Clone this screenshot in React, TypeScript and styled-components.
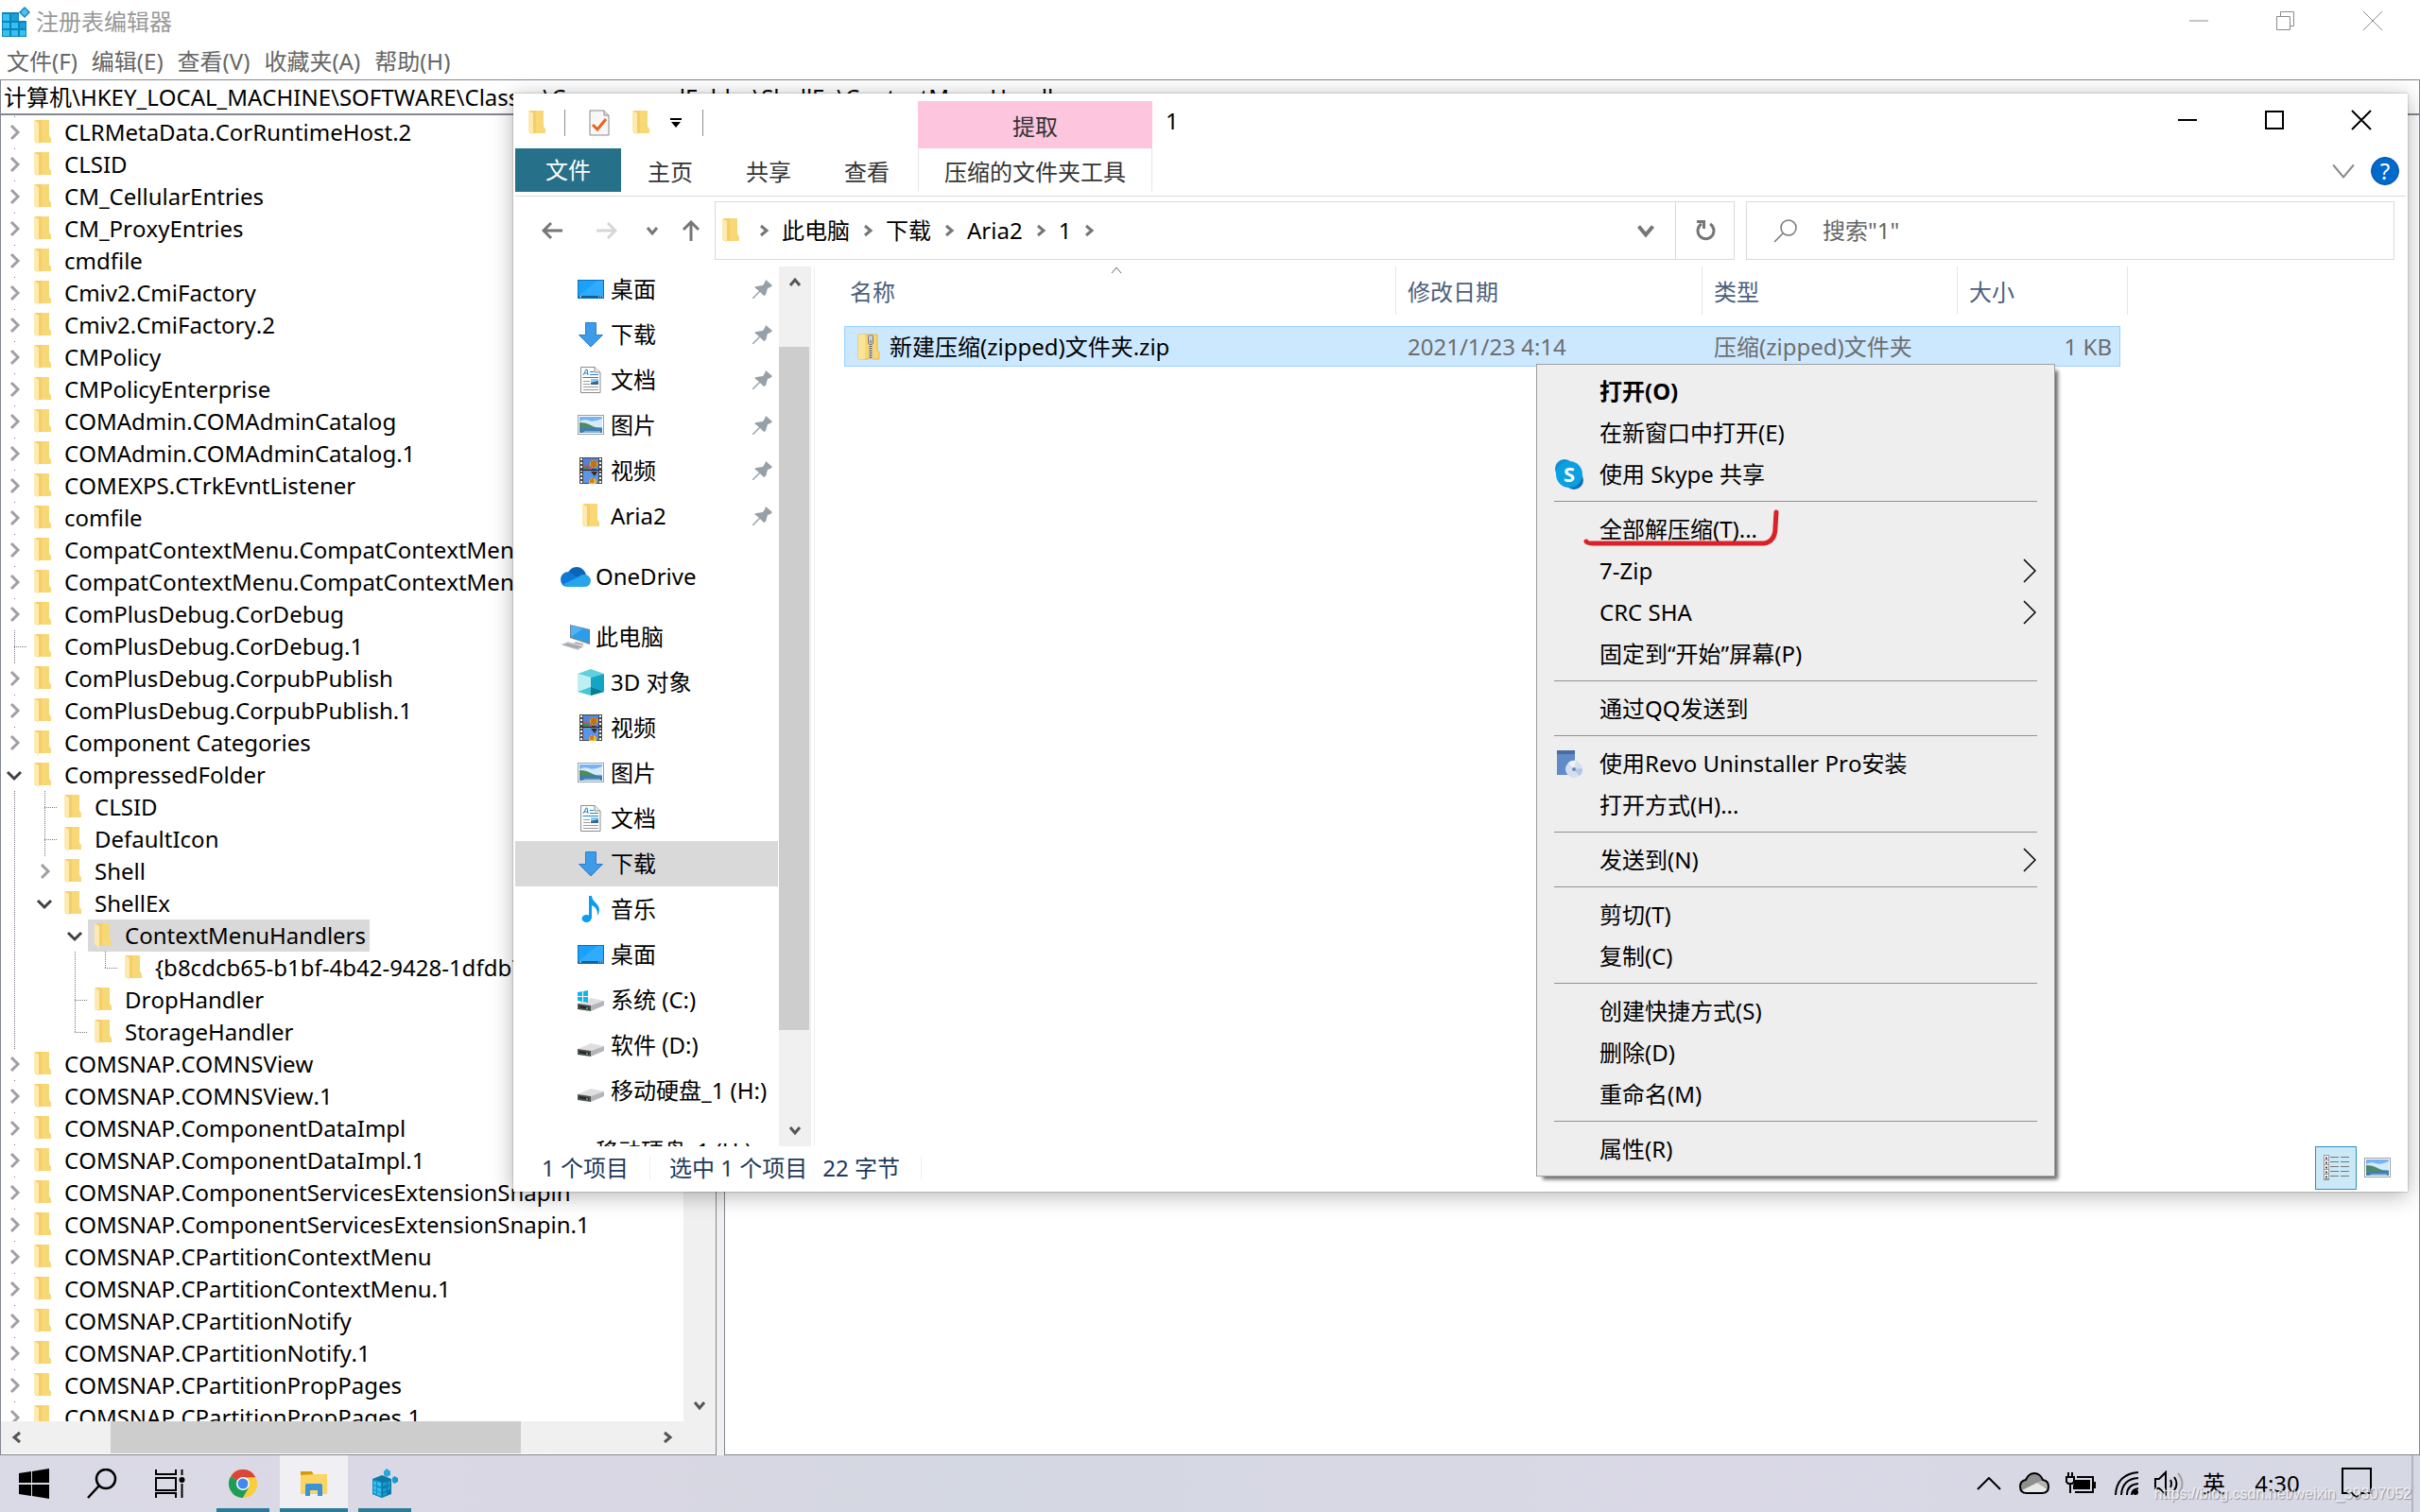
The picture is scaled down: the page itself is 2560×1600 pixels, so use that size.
import React from "react";
import styled, { createGlobalStyle, css } from "styled-components";

const GlobalStyle = createGlobalStyle`
  * { box-sizing: border-box; }
  html, body, #root { height: 100%; margin: 0; }
  body {
    font-family: "Noto Sans", "Noto Sans CJK SC", sans-serif;
    font-size: 24px;
    line-height: 34px;
    font-kerning: none;
    color: #000;
    overflow: hidden;
  }
  button, input { font: inherit; font-kerning: none; color: inherit; border: 0; padding: 0; margin: 0; background: none; }
  ul { list-style: none; margin: 0; padding: 0; }
  svg { display: block; flex: none; }
`;

/* ---------- shared icons ---------- */

const Folder = () => (
  <svg width="18" height="26" viewBox="0 0 18 26">
    <path d="M1 0H16V17L18 20V24H1Z" fill="#f5cd6b" />
    <path d="M8 0H16V17L18 20V24H8Z" fill="#f8d775" />
    <path d="M0 0L5 3V26L0 22Z" fill="#fdeab0" />
  </svg>
);

const DesktopIcon = () => (
  <svg width="28" height="28" viewBox="0 0 28 28">
    <rect x="0.5" y="4.5" width="27" height="19" fill="#1ba1fb" stroke="#0b6fb8" />
    <path d="M1 21L21 5H27V21Z" fill="#3fb2ff" opacity=".6" />
    <rect x="1" y="21" width="26" height="2" fill="#0d5f9f" />
    <path d="M2 22h2M22 22h1M24 22h1M26 22h1" stroke="#fff" />
  </svg>
);

const DownloadIcon = () => (
  <svg width="28" height="28" viewBox="0 0 28 28">
    <path d="M8.500 1.500H19.500V14.500H26.500L14 27L1.500 14.500H8.500Z" fill="#3d9be9" stroke="#2a7fcb" />
  </svg>
);

const DocumentIcon = () => (
  <svg width="28" height="28" viewBox="0 0 28 28">
    <path d="M3.500 0.500H18L24 6V27.500H3.500Z" fill="#fff" stroke="#8c8c8c" />
    <path d="M18 0.500V6H24" fill="#eee" stroke="#8c8c8c" />
    <path d="M6 9L9 3H10L11 9M7 7H11" fill="none" stroke="#1e84c4" />
    <path d="M13 5.500H17M13 8.500H22M5.500 11.500H22" stroke="#1e84c4" />
    <path d="M6 15.500H13M6 18.500H13M6 21.500H22M6 24.500H22" stroke="#9a9a9a" />
    <rect x="14" y="13" width="8" height="6" fill="#31688f" />
    <path d="M14 13h8v2l-8 2Z" fill="#8ec6ee" />
  </svg>
);

const PictureIcon = () => (
  <svg width="28" height="28" viewBox="0 0 28 28">
    <rect x="0.500" y="3.500" width="27" height="20" fill="#fff" stroke="#9aa0a6" />
    <rect x="2" y="5" width="24" height="17" fill="#76b4f3" />
    <path d="M2 10q5-3 10-1t14-2v9H2Z" fill="#d5ebfb" />
    <path d="M2 11q7 0 12 3t12 3v1H2Z" fill="#4f8a63" />
    <path d="M2 17H26V22H2Z" fill="#3f7fb0" />
    <path d="M8 20H24V22H5Z" fill="#7fb0d4" />
  </svg>
);

const VideoIcon = () => (
  <svg width="28" height="28" viewBox="0 0 28 28">
    <rect x="2" y="0" width="24" height="28" fill="#4a4a4a" />
    <path d="M4 1V28M24 1V28" stroke="#fff" strokeWidth="2" strokeDasharray="2 2" />
    <rect x="6" y="1" width="16" height="12" fill="#4f83dd" />
    <rect x="6" y="14" width="16" height="13" fill="#5b94ea" />
    <path d="M6 9q3-3 6 0t5 3v1H6Z" fill="#c7507b" />
    <path d="M6 10h6v3H6Z" fill="#3c8c4a" />
    <circle cx="17" cy="7" r="4" fill="#f2b71c" />
    <path d="M17 3v8M15 4v6M19 4v6" stroke="#8f2a12" />
    <path d="M15 12h4v2h-4z" fill="#6a3b12" />
    <path d="M14 15h7l-3 5Z" fill="#3b2a17" />
    <circle cx="16" cy="26" r="4" fill="#f2b71c" />
    <path d="M16 22v5M14 23v4" stroke="#b5441a" />
    <path d="M2 13.500H26" stroke="#222" />
  </svg>
);

const MusicIcon = () => (
  <svg width="28" height="28" viewBox="0 0 28 28">
    <ellipse cx="9.500" cy="24" rx="5" ry="4" fill="#0c9cf0" />
    <path d="M12 0H15C15 6 23 8 23 15Q23 18 21 21Q22 13 15 10V24H12Z" fill="#0c9cf0" />
  </svg>
);

const CubeIcon = () => (
  <svg width="28" height="28" viewBox="0 0 28 28">
    <path d="M14 0L28 5L14 9L0 5Z" fill="#5fd0dc" />
    <path d="M0 5L14 9V20L0 24Z" fill="#bdeff2" />
    <path d="M28 5L14 9V20L28 24Z" fill="#12a5c6" />
    <path d="M0 24L14 19L28 24L14 28Z" fill="#45c6d3" />
    <path d="M14 19L28 24L14 28Z" fill="#0a7c94" />
  </svg>
);

const DriveIcon = ({ system }: { system?: boolean }) => (
  <svg width="28" height="28" viewBox="0 0 28 28">
    <path d="M0 18L14 12L28 15L14 20Z" fill="#dfdfe1" />
    <path d="M0 18L14 20V26L0 24Z" fill="#4b4f4d" />
    <path d="M14 20L28 15V20L14 26Z" fill="#b4b5b9" />
    <path d="M2 20L12 22V24L2 22Z" fill="#222" />
    <circle cx="10" cy="23" r="1" fill="#4fd161" />
    {system && (
      <path d="M0 6L5 5V10H0ZM6 5L11 4V10H6ZM0 11H5V16L0 15ZM6 11H11V17L6 16Z" fill="#12b5ea" />
    )}
  </svg>
);

const CloudIcon = () => (
  <svg width="32" height="28" viewBox="0 0 32 28">
    <path d="M7 12Q10 4 17 4Q24 4 27 12L16 18Z" fill="#0a64b8" />
    <path d="M7 25Q0 24 0 17Q1 9 9 9L22 17L12 25Z" fill="#0f78d2" />
    <path d="M18 15Q22 11 27 12Q32 14 32 19Q31 25 25 25H7Q4 24 3 22Z" fill="#28a4ea" />
  </svg>
);

const ComputerIcon = () => (
  <svg width="32" height="28" viewBox="0 0 32 28">
    <path d="M10 1L31 6V22L10 15Z" fill="#707f8c" />
    <path d="M11 2L30 7V20L11 14Z" fill="#4db5f7" />
    <path d="M11 14L24 5L30 7V20Z" fill="#2d9dea" />
    <path d="M0 22L8 19L25 24L18 28Z" fill="#c9ccd0" />
    <path d="M3 22l16 4M6 21l16 4" stroke="#8f949a" />
    <path d="M16 19l8 2v2l-10-2Z" fill="#aeb3b9" />
  </svg>
);

const ZipIcon = () => (
  <svg width="24" height="28" viewBox="0 0 24 28">
    <path d="M1 1H21V17L23 20V27H1Z" fill="#f8d671" stroke="#eab83c" />
    <path d="M1 1H8V27H1Z" fill="#fbe497" />
    <path d="M12 0h4v28h-4z" fill="#d8d8d8" />
    <path d="M14 11V27" stroke="#555" strokeWidth="3" strokeDasharray="1 1" />
    <rect x="11.500" y="1.500" width="5" height="10" rx="2" fill="#cfcfcf" stroke="#777" />
    <path d="M14 7v3" stroke="#555" />
  </svg>
);

const PinIcon = () => (
  <svg width="21" height="21" viewBox="0 0 21 21">
    <path d="M14 0L21 6L19 8L16 9L14 16L12 17L8 13L1 20H0V19L7 12L2 8L4 7L11 6L13 3Z" fill="#96a0a8" />
  </svg>
);

type Direction = "up" | "down" | "left" | "right";
const turns: Record<Direction, number> = { down: 0, left: 90, up: 180, right: 270 };

const Chevron = ({ dir, size = 12, weight = 3, color = "#555" }: {
  dir: Direction; size?: number; weight?: number; color?: string;
}) => (
  <svg width={size} height={size} viewBox="0 0 12 12" overflow="visible">
    <path
      d="M1 3L6 9L11 3"
      fill="none"
      stroke={color}
      strokeWidth={(weight * 12) / size}
      transform={`rotate(${turns[dir]} 6 6)`}
    />
  </svg>
);

const Arrow = ({ dir, color = "#767676" }: { dir: Direction; color?: string }) => (
  <svg width="22" height="22" viewBox="0 0 22 22">
    <path
      d="M11 0V20M3 12L11 20L19 12"
      fill="none"
      stroke={color}
      strokeWidth="3"
      transform={`rotate(${turns[dir]} 11 11)`}
    />
  </svg>
);

const WindowGlyph = ({ kind, color, weight }: { kind: string; color: string; weight: number }) => (
  <svg width="22" height="22" viewBox="0 0 22 22" fill="none" stroke={color} strokeWidth={weight}>
    {kind === "min" && <path d="M1 11H21" />}
    {kind === "max" && <rect x="2" y="2" width="18" height="18" />}
    {kind === "restore" && <path d="M1.500 6.500H15.500V20.500H1.500ZM5.500 6V1.500H19.500V16.500H16" />}
    {kind === "close" && <path d="M1 1L21 21M21 1L1 21" />}
  </svg>
);

/* ---------- desktop ---------- */

const Desktop = styled.div`
  display: grid;
  grid-template-rows: 1fr 60px;
  height: 100vh;
  position: relative;
  overflow: hidden;
  background: #fff;
`;

const WindowControls = styled.div<{ $inset: number }>`
  display: flex;
  margin-left: auto;
  padding-right: ${(p) => p.$inset}px;
`;

const WindowButton = styled.button<{ $height: number }>`
  width: 92px;
  height: ${(p) => p.$height}px;
  display: grid;
  place-items: center;
`;

const Scrollbar = styled.div<{ $horizontal?: boolean }>`
  display: flex;
  flex-direction: ${(p) => (p.$horizontal ? "row" : "column")};
  justify-content: space-between;
  background: #f0f0f0;
  ${(p) => (p.$horizontal ? css`height: 34px; padding-right: 34px;` : css`width: 34px;`)}
  flex: none;
`;

const ScrollButton = styled.button`
  width: 34px;
  height: 34px;
  display: grid;
  place-items: center;
  flex: none;
`;

/* ---------- registry editor ---------- */

const Registry = styled.section`
  display: flex;
  flex-direction: column;
  min-height: 0;
  min-width: 0;
`;

const RegistryTitle = styled.header`
  display: flex;
  height: 46px;
  color: #999;
`;

const RegistryName = styled.div`
  display: flex;
  align-items: center;
  gap: 6px;
`;

const MenuBar = styled.nav`
  display: flex;
  gap: 15px;
  padding: 0 7px;
  height: 38px;
  align-items: center;
  color: #666;
`;

const AddressInput = styled.input`
  height: 38px;
  width: 100%;
  border: 1px solid #828790;
  border-bottom-width: 2px;
  padding: 0 3px 2px;
  outline: 0;
`;

const Panes = styled.div`
  flex: 1;
  min-height: 0;
  display: flex;
  gap: 8px;
  background: #f0f0f0;
`;

const TreePane = styled.div`
  width: 758px;
  display: flex;
  flex-direction: column;
  background: #fff;
  border: 1px solid #828790;
  border-top: 0;
  padding-bottom: 1px;
`;

const TreeBody = styled.div`
  flex: 1;
  min-height: 0;
  display: flex;
  justify-content: space-between;
`;

const TreeList = styled.ul`
  flex: 1;
  min-width: 0;
  overflow: hidden;
  padding-top: 1px;
`;

const TreeRow = styled.li`
  display: flex;
  gap: 4px;
  height: 34px;
`;

const TreeLabel = styled.button<{ $selected?: boolean }>`
  display: flex;
  align-items: center;
  gap: 14px;
  padding: 0 4px 0 7px;
  margin-left: -4px;
  height: 34px;
  white-space: nowrap;
  background: ${(p) => (p.$selected ? "#d9d9d9" : "none")};
`;

const TreeThumb = styled.div`
  flex: none;
  width: 434px;
  background: #cdcdcd;
  margin: 0 auto 0 82px;
`;

const ValuePane = styled.div`
  flex: 1;
  background: #fff;
  border: 1px solid #828790;
  border-top: 0;
`;

type Guide = "line" | "none" | "tee" | "elbow" | "closed" | "open";

const GuideCell = ({ kind }: { kind: Guide }) => (
  <svg width="28" height="34" viewBox="0 0 28 34" fill="none">
    {(kind === "line" || kind === "tee") && <path d="M14.500 0V34" stroke="#777" strokeDasharray="1 1" />}
    {kind === "elbow" && <path d="M14.500 0V17" stroke="#777" strokeDasharray="1 1" />}
    {(kind === "tee" || kind === "elbow") && <path d="M14 17.500H28" stroke="#777" strokeDasharray="1 1" />}
    {kind === "closed" && (
      <>
        <path d="M14.500 0V1" stroke="#777" />
        <path d="M11 10L18 17L11 24" stroke="#a0a0a0" strokeWidth="3" />
      </>
    )}
    {kind === "open" && <path d="M7 14L14 21L21 14" stroke="#404040" strokeWidth="3" />}
  </svg>
);

type Key = { name: string; guides?: Guide[]; selected?: boolean };

const keys: Key[] = [
  ...[
    "CLRMetaData.CorRuntimeHost.2", "CLSID", "CM_CellularEntries", "CM_ProxyEntries", "cmdfile",
    "Cmiv2.CmiFactory", "Cmiv2.CmiFactory.2", "CMPolicy", "CMPolicyEnterprise",
    "COMAdmin.COMAdminCatalog", "COMAdmin.COMAdminCatalog.1", "COMEXPS.CTrkEvntListener", "comfile",
    "CompatContextMenu.CompatContextMenu", "CompatContextMenu.CompatContextMenu.1",
    "ComPlusDebug.CorDebug",
  ].map((name) => ({ name })),
  { name: "ComPlusDebug.CorDebug.1", guides: ["tee"] },
  { name: "ComPlusDebug.CorpubPublish" },
  { name: "ComPlusDebug.CorpubPublish.1" },
  { name: "Component Categories" },
  { name: "CompressedFolder", guides: ["open"] },
  { name: "CLSID", guides: ["line", "tee"] },
  { name: "DefaultIcon", guides: ["line", "tee"] },
  { name: "Shell", guides: ["line", "closed"] },
  { name: "ShellEx", guides: ["line", "open"] },
  { name: "ContextMenuHandlers", guides: ["line", "none", "open"], selected: true },
  { name: "{b8cdcb65-b1bf-4b42-9428-1dfdb7ee92af}", guides: ["line", "none", "line", "elbow"] },
  { name: "DropHandler", guides: ["line", "none", "tee"] },
  { name: "StorageHandler", guides: ["line", "none", "elbow"] },
  ...[
    "COMSNAP.COMNSView", "COMSNAP.COMNSView.1", "COMSNAP.ComponentDataImpl",
    "COMSNAP.ComponentDataImpl.1", "COMSNAP.ComponentServicesExtensionSnapin",
    "COMSNAP.ComponentServicesExtensionSnapin.1", "COMSNAP.CPartitionContextMenu",
    "COMSNAP.CPartitionContextMenu.1", "COMSNAP.CPartitionNotify", "COMSNAP.CPartitionNotify.1",
    "COMSNAP.CPartitionPropPages", "COMSNAP.CPartitionPropPages.1",
  ].map((name) => ({ name })),
];

const RegistryLogo = () => (
  <svg width="32" height="32" viewBox="0 0 32 32">
    <rect x="2" y="6" width="26" height="26" fill="#0a86bd" />
    <path d="M3 8h7v7H3zM3 17h7v6H3zM12 17h7v6h-7zM3 25h7v6H3zM12 25h7v6h-7zM21 25h6v6h-6z" fill="#35c1f1" />
    <path d="M12 8h7v7h-7zM21 17h6v6h-6z" fill="#1b9fd6" />
    <path d="M20 5h9v10h-9z" fill="#fff" />
    <path d="M26 0L32 6L26 12L20 6Z" fill="#1585b8" />
    <path d="M26 2L30 6L26 10L22 6Z" fill="#4fc3ee" />
  </svg>
);

function RegistryEditor() {
  return (
    <Registry aria-label="注册表编辑器">
      <RegistryTitle>
        <RegistryName><RegistryLogo />注册表编辑器</RegistryName>
        <WindowControls $inset={4}>
          {["min", "restore", "close"].map((kind) => (
            <WindowButton key={kind} $height={44} aria-label={kind}>
              <WindowGlyph kind={kind} color="#8a8a8a" weight={1} />
            </WindowButton>
          ))}
        </WindowControls>
      </RegistryTitle>
      <MenuBar>
        {["文件(F)", "编辑(E)", "查看(V)", "收藏夹(A)", "帮助(H)"].map((m) => <button key={m}>{m}</button>)}
      </MenuBar>
      <AddressInput
        aria-label="地址"
        defaultValue="计算机\HKEY_LOCAL_MACHINE\SOFTWARE\Classes\CompressedFolder\ShellEx\ContextMenuHandlers"
      />
      <Panes>
        <TreePane>
          <TreeBody>
            <TreeList>
              {keys.map((k) => (
                <TreeRow key={k.name + (k.guides?.length ?? 0)}>
                  {(k.guides ?? ["closed"]).map((g, i) => <GuideCell key={i} kind={g as Guide} />)}
                  <TreeLabel $selected={k.selected}><Folder />{k.name}</TreeLabel>
                </TreeRow>
              ))}
            </TreeList>
            <Scrollbar>
              <ScrollButton aria-label="向上"><Chevron dir="up" /></ScrollButton>
              <ScrollButton aria-label="向下"><Chevron dir="down" /></ScrollButton>
            </Scrollbar>
          </TreeBody>
          <Scrollbar $horizontal>
            <ScrollButton aria-label="向左"><Chevron dir="left" /></ScrollButton>
            <TreeThumb />
            <ScrollButton aria-label="向右"><Chevron dir="right" /></ScrollButton>
          </Scrollbar>
        </TreePane>
        <ValuePane />
      </Panes>
    </Registry>
  );
}

/* ---------- file explorer ---------- */

const Explorer = styled.section`
  position: absolute;
  left: 543px;
  top: 99px;
  right: 13px;
  bottom: 339px;
  display: flex;
  flex-direction: column;
  padding: 0 2px;
  background: #fff;
  box-shadow: 0 0 2px rgba(0, 0, 0, 0.35), 0 4px 22px rgba(0, 0, 0, 0.3);
`;

const CaptionRow = styled.header`
  display: flex;
  height: 58px;
`;

const QuickAccess = styled.div`
  width: 426px;
  display: flex;
  align-items: center;
  padding: 0 0 0 14px;
  height: 62px;
`;

const QuickButton = styled.button<{ $width: number }>`
  width: ${(p) => p.$width}px;
  display: grid;
  place-items: center;
`;

const Divider = styled.span<{ $spaced?: boolean }>`
  width: 1px;
  height: 28px;
  margin-left: ${(p) => (p.$spaced ? 20 : 0)}px;
  background: #8c8c8c;
`;

const ContextTabTitle = styled.div`
  width: 248px;
  margin-top: 8px;
  padding-top: 4px;
  display: grid;
  place-items: center;
  background: #fdc5de;
  color: #333;
`;

const Caption = styled.div`
  padding: 12px 14px;
`;

const TabRow = styled.div`
  display: flex;
  height: 51px;
  border-bottom: 1px solid #dadbdc;
  color: #333;
`;

const Tab = styled.button<{ $kind?: "file" | "context" }>`
  height: 46px;
  width: 104px;
  padding-top: 4px;
  ${(p) => p.$kind === "file" && css`
    width: 112px;
    padding: 0;
    background: #277089;
    color: #fff;
  `}
  ${(p) => p.$kind === "context" && css`
    width: 248px;
    margin-left: 2px;
    border: 1px solid;
    border-color: transparent #e4e4e4;
  `}
`;

const TabTools = styled.div`
  display: flex;
  align-items: center;
  gap: 16px;
  margin-left: auto;
  padding: 0 7px 2px 0;
`;

const HelpButton = styled.button`
  width: 30px;
  height: 30px;
  border-radius: 50%;
  border: 1px solid #0a4f96;
  background: #0069cc;
  color: #fff;
  line-height: 28px;
`;

const NavigationRow = styled.div`
  display: flex;
  height: 74px;
  padding: 5px 12px 7px 10px;
`;

const NavButton = styled.button<{ $width: number }>`
  width: ${(p) => p.$width}px;
  display: grid;
  place-items: center;
`;

const AddressBox = styled.div`
  flex: 1070;
  margin: 0 12px 0 3px;
  border: 1px solid #d9d9d9;
  display: flex;
  align-items: center;
  padding-left: 7px;
`;

const Crumbs = styled.div`
  display: flex;
  align-items: center;
  gap: 13px;
  margin-left: 20px;
  flex: 1;
`;

const DropButton = styled.button<{ $divided?: boolean }>`
  width: 62px;
  height: 100%;
  display: grid;
  place-items: center;
  border-left: ${(p) => (p.$divided ? "1px solid #d9d9d9" : "0")};
`;

const SearchBox = styled.label`
  flex: 656;
  border: 1px solid #d9d9d9;
  display: flex;
  align-items: center;
  gap: 27px;
  padding-left: 28px;
  color: #666;
  input { flex: 1; min-width: 0; outline: 0; }
  input::placeholder { color: #666; opacity: 1; }
`;

const ExplorerBody = styled.div`
  flex: 1;
  min-height: 0;
  display: flex;
`;

const NavPane = styled.ul`
  width: 279px;
  overflow: hidden;
`;

const NavItem = styled.li<{ $root?: boolean; $selected?: boolean }>`
  display: flex;
  align-items: center;
  height: 48px;
  margin: ${(p) => (p.$root ? 16 : 0)}px 1px 0 0;
  padding: 0 6px 0 ${(p) => (p.$root ? 48 : 66)}px;
  background: ${(p) => (p.$selected ? "#d9d9d9" : "none")};
  white-space: nowrap;
  button { display: flex; align-items: center; gap: ${(p) => (p.$root ? 5 : 7)}px; }
  > svg { margin-left: auto; }
`;

const IconSlot = styled.span<{ $wide?: boolean }>`
  width: ${(p) => (p.$wide ? 32 : 28)}px;
  display: grid;
  place-items: center;
`;

const NavScrollbar = styled(Scrollbar)`
  margin-right: 3px;
`;

const NavThumb = styled.div`
  flex: 0 1 723px;
  margin: 51px 2px auto 0;
  background: #cdcdcd;
`;

const FileArea = styled.div`
  flex: 1;
  min-width: 0;
  border-left: 1px solid #f0f0f0;
  padding-left: 31px;
`;

const FileTable = styled.table`
  table-layout: fixed;
  width: 1358px;
  border-spacing: 0;
  th {
    position: relative;
    height: 51px;
    padding: 2px 0 0 12px;
    text-align: left;
    font-weight: 400;
    color: #4c607a;
    border-right: 1px solid #e5e5e5;
  }
  th:first-child { padding-left: 6px; }
  td {
    height: 43px;
    padding: 0 0 0 12px;
    background: #cce8ff;
    border: solid #99d1ff;
    border-width: 1px 0;
    color: #6d6d6d;
    white-space: nowrap;
  }
  td:first-child { border-left-width: 1px; color: #000; padding-left: 13px; }
  td:nth-child(4) { border-right-width: 1px; text-align: right; padding-right: 8px; }
  td:last-child { background: none; border: 0; padding: 0; }
  tbody::before { content: ""; display: block; height: 12px; }
`;

const SortMark = styled.span`
  position: absolute;
  top: -2px;
  left: calc(50% - 10px);
`;

const FileName = styled.div`
  display: flex;
  align-items: center;
  gap: 10px;
`;

const StatusBar = styled.footer`
  display: flex;
  height: 48px;
  padding: 0 16px 2px 28px;
  color: #1e395b;
  align-items: center;
`;

const StatusItem = styled.span`
  display: flex;
  gap: 16px;
  padding-right: 22px;
  margin-right: 20px;
  line-height: 24px;
  border-right: 1px solid #efefef;
`;

const ViewButtons = styled.div`
  display: flex;
  gap: 8px;
  margin-left: auto;
`;

const ViewButton = styled.button<{ $active?: boolean }>`
  height: 46px;
  min-width: ${(p) => (p.$active ? 44 : 28)}px;
  display: grid;
  place-items: center;
  ${(p) => p.$active && css`
    background: #cbe8f6;
    border: 1px solid #2f8fc0;
  `}
`;

type Place = { name: string; icon: React.ReactNode; root?: boolean; pinned?: boolean; selected?: boolean };

const places: Place[] = [
  { name: "桌面", icon: <DesktopIcon />, pinned: true },
  { name: "下载", icon: <DownloadIcon />, pinned: true },
  { name: "文档", icon: <DocumentIcon />, pinned: true },
  { name: "图片", icon: <PictureIcon />, pinned: true },
  { name: "视频", icon: <VideoIcon />, pinned: true },
  { name: "Aria2", icon: <Folder />, pinned: true },
  { name: "OneDrive", icon: <CloudIcon />, root: true },
  { name: "此电脑", icon: <ComputerIcon />, root: true },
  { name: "3D 对象", icon: <CubeIcon /> },
  { name: "视频", icon: <VideoIcon /> },
  { name: "图片", icon: <PictureIcon /> },
  { name: "文档", icon: <DocumentIcon /> },
  { name: "下载", icon: <DownloadIcon />, selected: true },
  { name: "音乐", icon: <MusicIcon /> },
  { name: "桌面", icon: <DesktopIcon /> },
  { name: "系统 (C:)", icon: <DriveIcon system /> },
  { name: "软件 (D:)", icon: <DriveIcon /> },
  { name: "移动硬盘_1 (H:)", icon: <DriveIcon /> },
  { name: "移动硬盘_1 (H:)", icon: <DriveIcon />, root: true },
];

const CheckDocument = () => (
  <svg width="22" height="28" viewBox="0 0 22 28">
    <path d="M1 1H16L21 6V27H1Z" fill="#f7f7f9" stroke="#8a8a8a" />
    <path d="M16 1V6H21" fill="#ddd" stroke="#8a8a8a" />
    <path d="M4 16L9 21L18 10" fill="none" stroke="#e8641b" strokeWidth="3" />
  </svg>
);

function FileExplorer() {
  return (
    <Explorer aria-label="1">
      <CaptionRow>
        <QuickAccess>
          <Folder />
          <Divider $spaced />
          <QuickButton $width={71} aria-label="属性"><CheckDocument /></QuickButton>
          <QuickButton $width={18} aria-label="新建文件夹"><Folder /></QuickButton>
          <QuickButton $width={56} aria-label="自定义">
            <svg width="12" height="10" viewBox="0 0 12 10"><path d="M0 0H12V2H0ZM1 4H11L6 10Z" /></svg>
          </QuickButton>
          <Divider />
        </QuickAccess>
        <ContextTabTitle>提取</ContextTabTitle>
        <Caption>1</Caption>
        <WindowControls $inset={1}>
          {["min", "max", "close"].map((kind) => (
            <WindowButton key={kind} $height={56} aria-label={kind}>
              <WindowGlyph kind={kind} color="#000" weight={2} />
            </WindowButton>
          ))}
        </WindowControls>
      </CaptionRow>
      <TabRow>
        <Tab $kind="file">文件</Tab>
        <Tab>主页</Tab>
        <Tab>共享</Tab>
        <Tab>查看</Tab>
        <Tab $kind="context">压缩的文件夹工具</Tab>
        <TabTools>
          <Chevron dir="down" size={26} weight={2} color="#8a8a8a" />
          <HelpButton aria-label="帮助">?</HelpButton>
        </TabTools>
      </TabRow>
      <NavigationRow>
        <NavButton $width={58} aria-label="后退"><Arrow dir="left" /></NavButton>
        <NavButton $width={58} aria-label="前进"><Arrow dir="right" color="#d6d6d6" /></NavButton>
        <NavButton $width={38} aria-label="最近"><Chevron dir="down" color="#767676" /></NavButton>
        <NavButton $width={44} aria-label="向上"><Arrow dir="up" /></NavButton>
        <AddressBox>
          <Folder />
          <Crumbs>
            {["此电脑", "下载", "Aria2", "1"].map((c) => (
              <React.Fragment key={c}>
                <Chevron dir="right" color="#767676" />
                <button>{c}</button>
              </React.Fragment>
            ))}
            <Chevron dir="right" color="#767676" />
          </Crumbs>
          <DropButton aria-label="展开"><Chevron dir="down" size={18} weight={4} color="#767676" /></DropButton>
          <DropButton $divided aria-label="刷新">
            <svg width="22" height="24" viewBox="0 0 22 24" fill="none" stroke="#767676" strokeWidth="3">
              <path d="M16 5A8.500 8.500 0 1 1 7 5" />
              <path d="M2 2.500H9.500V10" />
            </svg>
          </DropButton>
        </AddressBox>
        <SearchBox>
          <svg width="25" height="25" viewBox="0 0 25 25" fill="none" stroke="#767676" strokeWidth="1.500">
            <circle cx="16" cy="9" r="8" /><path d="M10 15L1 24" />
          </svg>
          <input aria-label="搜索" placeholder={'搜索"1"'} />
        </SearchBox>
      </NavigationRow>
      <ExplorerBody>
        <NavPane>
          {places.map((p, i) => (
            <NavItem key={i} $root={p.root} $selected={p.selected}>
              <button><IconSlot $wide={p.root}>{p.icon}</IconSlot>{p.name}</button>
              {p.pinned && <PinIcon />}
            </NavItem>
          ))}
        </NavPane>
        <NavScrollbar>
          <ScrollButton aria-label="向上"><Chevron dir="up" /></ScrollButton>
          <NavThumb />
          <ScrollButton aria-label="向下"><Chevron dir="down" /></ScrollButton>
        </NavScrollbar>
        <FileArea>
          <FileTable>
            <colgroup>
              <col width={584} /><col width={324} /><col width={270} /><col width={172} /><col width={8} />
            </colgroup>
            <thead>
              <tr>
                <th>名称<SortMark><Chevron dir="up" weight={1} color="#666" /></SortMark></th>
                <th>修改日期</th>
                <th>类型</th>
                <th colSpan={2}>大小</th>
              </tr>
            </thead>
            <tbody>
              <tr>
                <td><FileName><ZipIcon />新建压缩(zipped)文件夹.zip</FileName></td>
                <td>2021/1/23 4:14</td>
                <td>压缩(zipped)文件夹</td>
                <td>1 KB</td>
                <td />
              </tr>
            </tbody>
          </FileTable>
        </FileArea>
      </ExplorerBody>
      <StatusBar>
        <StatusItem>1 个项目</StatusItem>
        <StatusItem><span>选中 1 个项目</span><span>22 字节</span></StatusItem>
        <ViewButtons>
          <ViewButton $active aria-label="详细信息">
            <svg width="28" height="28" viewBox="0 0 28 28" stroke="#777">
              <rect x="1.500" y="0.500" width="5" height="26" fill="#fff" stroke="#999" />
              {[3, 8, 13, 18, 23].map((y) => (
                <g key={y}>
                  <path d={`M3 ${y}.5H5`} stroke="#444" strokeWidth="2" />
                  <path d={`M8 ${y - 1}.5H17M19 ${y - 1}.5H28`} />
                  <path d={`M1 ${y + 2}.5H6`} stroke="#999" />
                </g>
              ))}
            </svg>
          </ViewButton>
          <ViewButton aria-label="缩略图"><PictureIcon /></ViewButton>
        </ViewButtons>
      </StatusBar>
    </Explorer>
  );
}

/* ---------- context menu ---------- */

const Menu = styled.div`
  position: absolute;
  left: 1625px;
  top: 385px;
  width: 549px;
  padding: 6px 0;
  background: #eeeeee;
  border: 1px solid #a0a0a0;
  box-shadow: 5px 5px 4px -2px rgba(0, 0, 0, 0.6);
`;

const MenuItem = styled.button<{ $bold?: boolean }>`
  position: relative;
  display: grid;
  grid-template-columns: 66px 1fr 33px;
  align-items: center;
  width: 100%;
  height: 44px;
  text-align: left;
  font-weight: ${(p) => (p.$bold ? 700 : 400)};
`;

const MenuIcon = styled.span`
  padding-left: 19px;
`;

const MenuRule = styled.hr`
  height: 1px;
  margin: 6px 18px 7px;
  border: 0;
  background: #919191;
`;

const Underline = styled.svg`
  position: absolute;
  left: 48px;
  top: 0;
`;

const SkypeIcon = () => (
  <svg width="30" height="34" viewBox="0 0 30 34">
    <circle cx="10" cy="11" r="10" fill="#0d8fd0" />
    <circle cx="20" cy="23" r="10" fill="#0a6fb6" />
    <circle cx="15" cy="17" r="14" fill="#0aa0e2" />
    <text x="15" y="25" textAnchor="middle" fontSize="22" fontWeight="700" fill="#fff">S</text>
  </svg>
);

const RevoIcon = () => (
  <svg width="30" height="30" viewBox="0 0 30 30">
    <rect x="2" y="1" width="19" height="26" fill="#5f8bc9" />
    <rect x="2" y="1" width="19" height="4" fill="#4a6c9e" />
    <circle cx="20" cy="21" r="9" fill="#d3dff0" />
    <path d="M20 21L14 14A9 9 0 0 1 22 12Z" fill="#eef3fa" />
    <path d="M20 21L26 28A9 9 0 0 0 29 20Z" fill="#b3c6e2" />
    <circle cx="20" cy="21" r="2" fill="#6f87a8" />
  </svg>
);

type Entry = { label: string; icon?: React.ReactNode; bold?: boolean; sub?: boolean; marked?: boolean };

const menuGroups: Entry[][] = [
  [{ label: "打开(O)", bold: true }, { label: "在新窗口中打开(E)" }, { label: "使用 Skype 共享", icon: <SkypeIcon /> }],
  [
    { label: "全部解压缩(T)...", marked: true },
    { label: "7-Zip", sub: true },
    { label: "CRC SHA", sub: true },
    { label: "固定到“开始”屏幕(P)" },
  ],
  [{ label: "通过QQ发送到" }],
  [{ label: "使用Revo Uninstaller Pro安装", icon: <RevoIcon /> }, { label: "打开方式(H)..." }],
  [{ label: "发送到(N)", sub: true }],
  [{ label: "剪切(T)" }, { label: "复制(C)" }],
  [{ label: "创建快捷方式(S)" }, { label: "删除(D)" }, { label: "重命名(M)" }],
  [{ label: "属性(R)" }],
];

function ContextMenu() {
  return (
    <Menu>
      {menuGroups.map((group, g) => (
        <React.Fragment key={g}>
          {g > 0 && <MenuRule />}
          {group.map((item) => (
            <MenuItem key={item.label} $bold={item.bold}>
              <MenuIcon>{item.icon}</MenuIcon>
              <span>{item.label}</span>
              {item.sub && (
                <svg width="14" height="26" viewBox="0 0 14 26" fill="none" stroke="#000" strokeWidth="1.500">
                  <path d="M1 1L13 13L1 25" />
                </svg>
              )}
              {item.marked && (
                <Underline width="212" height="44" viewBox="0 0 212 44" fill="none" stroke="#db2128" strokeWidth="5" strokeLinecap="round">
                  <path d="M4 35Q5 37 12 37L192 37Q204 35 204 20L205 4" />
                </Underline>
              )}
            </MenuItem>
          ))}
        </React.Fragment>
      ))}
    </Menu>
  );
}

/* ---------- taskbar ---------- */

const Taskbar = styled.footer`
  display: flex;
  justify-content: space-between;
  background: linear-gradient(90deg, #dadae6, #d9d7e3 25%, #d4d8e2 40%, #dad8e6 70%, #d6d8e4);
`;

const TaskGroup = styled.div<{ $apps?: boolean }>`
  display: flex;
  gap: ${(p) => (p.$apps ? 3 : 0)}px;
  margin-right: ${(p) => (p.$apps ? "auto" : "5px")};
`;

const TaskButton = styled.button<{ $running?: boolean; $active?: boolean }>`
  width: 72px;
  height: 60px;
  display: grid;
  place-items: center;
  background:
    ${(p) => (p.$active
      ? "linear-gradient(#2a7c98, #2a7c98) center bottom / 100% 4px no-repeat, #f0eff4"
      : p.$running
        ? "linear-gradient(#2a7c98, #2a7c98) center bottom / 56px 4px no-repeat"
        : "none")};
`;

const Tray = styled.div`
  position: relative;
  display: flex;
  align-items: center;
  border-right: 2px solid #b4b5c4;
  padding-right: 15px;
  margin-right: 7px;
`;

const TrayButton = styled.button<{ $width: number }>`
  width: ${(p) => p.$width}px;
  height: 60px;
  display: grid;
  place-items: center;
`;

const Watermark = styled.span`
  position: absolute;
  right: 0;
  bottom: 9px;
  font: 16px/20px "Liberation Sans", sans-serif;
  color: rgba(255, 255, 255, 0.8);
  text-shadow: 1px 1px 1px rgba(90, 90, 100, 0.6);
  white-space: nowrap;
`;

const BlocksIcon = () => (
  <svg width="28" height="32" viewBox="0 0 28 32">
    <path d="M1 11L11 7L21 11V27L11 31L1 27Z" fill="#0b79a8" />
    <path d="M1 11L11 14V31L1 27Z" fill="#0d8fc4" />
    <path d="M2 13l3 1v4l-3-1zM6 14l4 1v4l-4-1zM2 18l3 1v4l-3-1zM6 20l4 1v4l-4-1zM2 23l3 1v3l-3-1zM6 25l4 1v3l-4-1z" fill="#35bdf0" />
    <path d="M12 15l4-1v4l-4 1zM17 14l3-1v4l-3 1zM12 21l4-1v4l-4 1zM17 19l3-1v4l-3 1zM12 26l4-1v3l-4 1z" fill="#1799cc" />
    <path d="M16 0l4 3v4l-4 2l-3-2V3Z" fill="#25a8dc" />
    <path d="M24 8l4 2v4l-4 2l-2-2v-4Z" fill="#149bd0" />
  </svg>
);

const ChromeIcon = () => (
  <svg width="30" height="30" viewBox="0 0 30 30">
    <circle cx="15" cy="15" r="15" fill="#f8ce3b" />
    <path d="M15 15L2 7.500A15 15 0 0 1 28 7.500L28 8.500H15Z" fill="#dc4437" />
    <path d="M15 15L2 7.500A15 15 0 0 0 15 30L21.500 18.700Z" fill="#1e9d58" />
    <path d="M15 30L21.500 18.700L21 8.500H28.500A15 15 0 0 1 15 30Z" fill="#f8ce3b" />
    <circle cx="15" cy="15" r="7" fill="#fff" />
    <circle cx="15" cy="15" r="5.500" fill="#4586f2" />
  </svg>
);

function TaskbarView() {
  return (
    <Taskbar>
      <TaskGroup>
        <TaskButton aria-label="开始">
          <svg width="32" height="32" viewBox="0 0 32 32">
            <path d="M0 5L13 3V15H0ZM14 3L32 0V15H14ZM0 17H13V29L0 27ZM14 17H32V32L14 29Z" />
          </svg>
        </TaskButton>
        <TaskButton aria-label="搜索">
          <svg width="32" height="32" viewBox="0 0 32 32" fill="none" stroke="#000" strokeWidth="2.500">
            <circle cx="20" cy="11" r="10" /><path d="M13 18L1 31" />
          </svg>
        </TaskButton>
        <TaskButton aria-label="任务视图">
          <svg width="34" height="32" viewBox="0 0 34 32" fill="none" stroke="#000" strokeWidth="2">
            <path d="M2 1V6H23V1M2 10H23V23H2ZM2 31V26H23V31M29.500 1V7M29.500 16V31" />
            <circle cx="29.500" cy="12" r="3" fill="#000" stroke="none" />
          </svg>
        </TaskButton>
      </TaskGroup>
      <TaskGroup $apps>
        <TaskButton aria-label="Chrome" $running><ChromeIcon /></TaskButton>
        <TaskButton aria-label="文件资源管理器" $running $active>
          <svg width="28" height="26" viewBox="0 0 28 26">
            <path d="M0 0H12L14 4H0Z" fill="#d69a11" />
            <path d="M0 4L14 3H28V24H0Z" fill="#fbd461" />
            <path d="M5 26V15Q5 13 7 13H21Q23 13 23 15V26H18V20H10V26Z" fill="#3a93d8" />
          </svg>
        </TaskButton>
        <TaskButton aria-label="注册表编辑器" $running><BlocksIcon /></TaskButton>
      </TaskGroup>
      <Tray>
        <TrayButton $width={48} aria-label="显示隐藏的图标">
          <svg width="26" height="14" viewBox="0 0 26 14" fill="none" stroke="#000" strokeWidth="2">
            <path d="M1 13L13 1L25 13" />
          </svg>
        </TrayButton>
        <TrayButton $width={48} aria-label="OneDrive">
          <svg width="32" height="24" viewBox="0 0 32 24">
            <path d="M8 22Q1 22 1 15Q1 9 7 8Q10 1 16 1Q22 1 25 8Q31 9 31 15Q31 22 24 22Z" fill="#8f8f8f" />
            <path d="M3 19L19 11L30 18Q28 22 24 22H8Q5 22 3 19Z" fill="#e8e8e8" />
            <path d="M19 11L26 8Q31 10 30 17Z" fill="#b6b6b6" />
            <path d="M8 22Q1 22 1 15Q1 9 7 8Q10 1 16 1Q22 1 25 8Q31 9 31 15Q31 22 24 22Z" fill="none" stroke="#000" strokeWidth="2" />
          </svg>
        </TrayButton>
        <TrayButton $width={50} aria-label="电源">
          <svg width="32" height="24" viewBox="0 0 32 24" fill="none" stroke="#000" strokeWidth="2">
            <path d="M3 0V5M7 0V5M1 5H9V10L7 12H3L1 10ZM5 12V22M12 5H29V21H10M31 10V17" />
            <path d="M10 8H26V18H8V14Z" fill="#000" stroke="none" />
          </svg>
        </TrayButton>
        <TrayButton $width={48} aria-label="网络">
          <svg width="26" height="26" viewBox="0 0 26 26" fill="none" stroke="#000" strokeWidth="2">
            <path d="M1 25Q2 3 25 1M7 25Q8 8 25 7M13 25Q13 14 25 13M18 25Q18 19 25 18" />
            <circle cx="22" cy="22" r="3" fill="#000" stroke="none" />
          </svg>
        </TrayButton>
        <TrayButton $width={44} aria-label="音量">
          <svg width="34" height="28" viewBox="0 0 34 28" fill="none" stroke="#000" strokeWidth="2">
            <path d="M1 9H5L12 2V25L5 19H1ZM17 10Q19 14 17 18M21 7Q26 14 21 21" />
            <path d="M25 3Q34 14 25 25" stroke="#a0a0a8" />
          </svg>
        </TrayButton>
        <TrayButton $width={48}>英</TrayButton>
        <TrayButton $width={86}>4:30</TrayButton>
        <TrayButton $width={84} aria-label="通知">
          <svg width="34" height="34" viewBox="0 0 34 34" fill="none" stroke="#000" strokeWidth="2">
            <path d="M1 1H31V27H21L16 32L11 27H1Z" />
          </svg>
        </TrayButton>
        <Watermark>https://blog.csdn.net/weixin_39307052</Watermark>
      </Tray>
    </Taskbar>
  );
}

export default function App() {
  return (
    <>
      <GlobalStyle />
      <Desktop>
        <RegistryEditor />
        <TaskbarView />
        <FileExplorer />
        <ContextMenu />
      </Desktop>
    </>
  );
}
